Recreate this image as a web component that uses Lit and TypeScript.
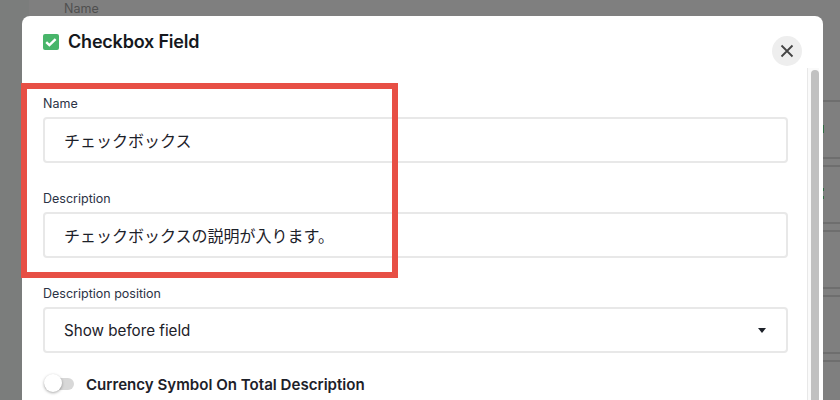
import { LitElement, html, css } from "lit";
import { customElement } from "lit/decorators.js";

const bgLines = [100, 157, 165, 222, 230, 287, 295, 352, 360];
const bgMarks = [[125, 8], [188, 3], [196, 3]];

@customElement("app-root")
class AppRoot extends LitElement {
  static styles = css`
    :host {
      display: block;
      position: relative;
      width: 840px;
      height: 400px;
      overflow: hidden;
      background: #7f7f7f;
      font-family: Inter, "Noto Sans CJK JP", sans-serif;
      color: #1d2129;
    }
    .under-left {
      position: absolute;
      left: 0;
      top: 0;
      width: 29px;
      height: 400px;
      background: #7b7d7c;
    }
    .under-name {
      position: absolute;
      left: 64px;
      top: 1px;
      font-size: 12.5px;
      line-height: 16px;
      color: #4f4f4f;
    }
    .under-line {
      position: absolute;
      left: 823px;
      width: 17px;
      height: 2px;
      background: #6e6e6e;
    }
    .under-mark {
      position: absolute;
      left: 823px;
      width: 1px;
      background: #2f6b42;
    }
    .modal {
      position: absolute;
      left: 22px;
      top: 16px;
      width: 801px;
      height: 420px;
      box-sizing: border-box;
      background: #fff;
      border-radius: 8px;
      padding: 16px 35px 0 21px;
    }
    .head {
      display: flex;
      align-items: center;
      gap: 9px;
      height: 20px;
      margin-bottom: 43px;
      font-size: 18px;
      font-weight: 600;
      color: #15181d;
      letter-spacing: -0.2px;
      line-height: 18px;
    }
    .close {
      position: absolute;
      left: 750px;
      top: 20px;
      width: 30px;
      height: 30px;
      border-radius: 50%;
      background: #eeeeee;
      display: flex;
      align-items: center;
      justify-content: center;
    }
    .track {
      position: absolute;
      left: 785px;
      top: 52px;
      bottom: 0;
      width: 12px;
      box-sizing: border-box;
      background: #fafafa;
      border-left: 1px solid #e8e8e8;
      padding: 2px 0 0 3px;
    }
    .thumb {
      width: 8px;
      height: 100%;
      border-radius: 4px 4px 0 0;
      background: #c1c1c1;
    }
    .field {
      display: flex;
      flex-direction: column;
      gap: 4px;
    }
    .field + .field {
      margin-top: 27px;
    }
    .label {
      font-size: 12.5px;
      line-height: 18px;
      color: #2b3245;
    }
    .input {
      height: 46px;
      box-sizing: border-box;
      border: 2px solid #e8e8e8;
      border-radius: 4px;
      padding: 0 19px;
      display: flex;
      align-items: center;
      justify-content: space-between;
      font-size: 16px;
      color: #1d2129;
    }
    .latin {
      font-size: 15.2px;
    }
    .caret {
      width: 0;
      height: 0;
      border-left: 4px solid transparent;
      border-right: 4px solid transparent;
      border-top: 5px solid #1d2129;
      margin-right: 1px;
    }
    .toggle-row {
      display: flex;
      align-items: center;
      gap: 12px;
      height: 18px;
      margin-top: 22px;
      font-size: 15.1px;
      font-weight: 600;
      color: #1d2129;
    }
    .toggle {
      position: relative;
      width: 30px;
      height: 12px;
      margin-left: 1px;
      border-radius: 6px;
      background: #d8d8d8;
    }
    .knob {
      position: absolute;
      left: 0;
      top: -4px;
      width: 18px;
      height: 18px;
      border-radius: 50%;
      background: #fff;
      box-shadow: 0 1px 3px rgba(0, 0, 0, 0.35);
    }
    .highlight {
      position: absolute;
      left: 21px;
      top: 83px;
      width: 377px;
      height: 195px;
      box-sizing: border-box;
      border: 6px solid #e74f45;
    }
  `;

  render() {
    return html`
      <div class="under-left"></div>
      <div class="under-name">Name</div>
      ${bgLines.map(y => html`<div class="under-line" style="top:${y}px"></div>`)}
      ${bgMarks.map(([y, h]) => html`<div class="under-mark" style="top:${y}px;height:${h}px"></div>`)}
      <div class="modal">
        <div class="head">
          <svg width="16" height="16" viewBox="0 0 16 16">
            <rect width="16" height="16" rx="2" fill="#48b56a"/>
            <path d="M3.2 8.2 6.4 11.2 12.6 5.2" fill="none" stroke="#fff" stroke-width="2.4"/>
          </svg>
          Checkbox Field
        </div>
        <div class="close">
          <svg width="14" height="14" viewBox="0 0 14 14">
            <path d="M1.5 1.5 12.5 12.5M12.5 1.5 1.5 12.5" stroke="#444" stroke-width="1.8" fill="none"/>
          </svg>
        </div>
        <div class="track"><div class="thumb"></div></div>
        <div class="field">
          <div class="label">Name</div>
          <div class="input">チェックボックス</div>
        </div>
        <div class="field">
          <div class="label">Description</div>
          <div class="input">チェックボックスの説明が入ります。</div>
        </div>
        <div class="field">
          <div class="label">Description position</div>
          <div class="input"><span class="latin">Show before field</span><span class="caret"></span></div>
        </div>
        <div class="toggle-row">
          <div class="toggle"><div class="knob"></div></div>
          Currency Symbol On Total Description
        </div>
      </div>
      <div class="highlight"></div>
    `;
  }
}
